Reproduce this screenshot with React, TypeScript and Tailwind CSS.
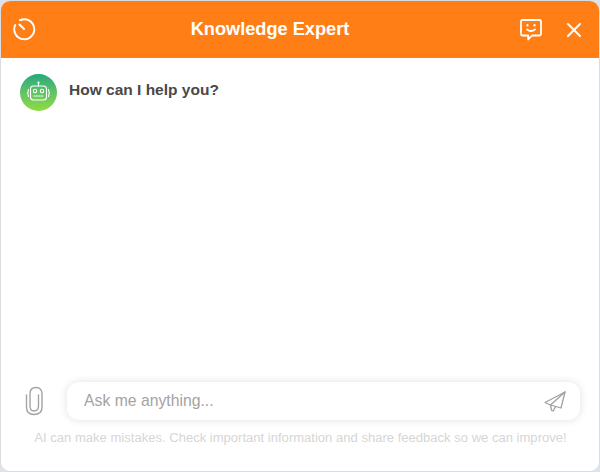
export default function App() {
  return (
    <div className="w-[600px] h-[472px] bg-[#dfe3e8] font-['Liberation_Sans',sans-serif]">
      <div className="w-full h-full flex flex-col bg-white border border-[#d9dde2] rounded-[10px] overflow-hidden">
        <div className="h-[58px] shrink-0 -mt-px -mx-px bg-[#ff7f16] flex items-center pl-[12px] pr-[18px] text-white">
          <svg width="24" height="24" viewBox="0 0 24 24" fill="none" stroke="white" strokeWidth="1.9" strokeLinecap="round">
            <path d="M8 3.2 A10 10 0 1 1 3.2 8" />
            <path d="M7.5 7.5 L12 12" />
            <path d="M9.5 2.8 L10 2.6" />
          </svg>
          <div className="flex-1 text-center text-[18.2px] font-bold leading-none pr-[15px]">Knowledge Expert</div>
          <svg className="mr-[23px] mt-[1px]" width="24" height="24" viewBox="0 0 24 24" fill="none" stroke="white" strokeWidth="1.8" strokeLinecap="round" strokeLinejoin="round">
            <path d="M3.5 2 H20.5 Q22 2 22 3.5 V16 Q22 17.5 20.5 17.5 H13 L9.2 21.5 V17.5 H3.5 Q2 17.5 2 16 V3.5 Q2 2 3.5 2 Z" />
            <path d="M8 11.5 Q12 14.5 16 11.5" />
            <path d="M8.5 7 V7.4 M15.5 7 V7.4" strokeWidth="2.2" />
          </svg>
          <svg className="mt-[2px]" width="16" height="16" viewBox="0 0 16 16" fill="none" stroke="white" strokeWidth="2" strokeLinecap="round">
            <path d="M2 2 L14 14 M14 2 L2 14" />
          </svg>
        </div>
        <div className="flex-1 flex items-start gap-[12px] pt-[16px] pl-[19px]">
          <div className="w-[37px] h-[37px] rounded-full bg-gradient-to-b from-[#1fa97a] to-[#8fdc3c] flex items-center justify-center">
            <svg width="27" height="27" viewBox="0 0 27 27" fill="none" stroke="white" strokeWidth="1.1" strokeLinecap="round">
              <rect x="5.5" y="7" width="16" height="14" rx="3" />
              <path d="M13.5 7 V4" />
              <circle cx="13.5" cy="3.6" r="0.6" />
              <circle cx="10" cy="12" r="1.7" />
              <circle cx="17" cy="12" r="1.7" />
              <path d="M9 17 H18" strokeDasharray="1.2 1.3" />
              <path d="M3.5 10.5 Q2 14 3.5 17.5 M23.5 10.5 Q25 14 23.5 17.5" />
            </svg>
          </div>
          <div className="text-[15.5px] font-bold text-[#484848] leading-[19px] mt-[6px]">How can I help you?</div>
        </div>
        <div className="flex items-center pl-[19px] pr-[19px] shrink-0">
          <svg className="mr-[21px] shrink-0" width="26" height="30" viewBox="0 0 26 30" fill="none" stroke="#a3a3a3" strokeWidth="1.4" strokeLinecap="round">
            <path d="M6.5 9 V21 Q6.5 28.5 14 28.5 Q22 28.5 22 21 V8 Q22 1.5 16 1.5 Q10 1.5 10 8 V20 Q10 25 14 25 Q18.5 25 18.5 20 V9" />
          </svg>
          <div className="flex-1 h-[38px] bg-white rounded-[12px] shadow-[0_0_8px_rgba(0,0,0,0.12)] flex items-center pl-[17px] pr-[14px]">
            <span className="flex-1 text-[15.75px] text-[#a3a3a3]">Ask me anything...</span>
            <svg width="22" height="21" viewBox="0 0 22 21" fill="none" stroke="#a0a0a0" strokeWidth="1.3" strokeLinejoin="round" strokeLinecap="round">
              <path d="M21 1 L1 11.5 L6.5 14 L17 17 L21 1 Z" />
              <path d="M21 1 L6.5 14 L7.5 19 Q8 20.5 9.5 19.5 L11.5 15.5" />
            </svg>
          </div>
        </div>
        <div className="h-[51px] shrink-0 pt-[10px] text-center text-[13.05px] leading-[15px] text-[#d6d6d6] pl-[1px] whitespace-nowrap">AI can make mistakes. Check important information and share feedback so we can improve!</div>
      </div>
    </div>
  );
}
